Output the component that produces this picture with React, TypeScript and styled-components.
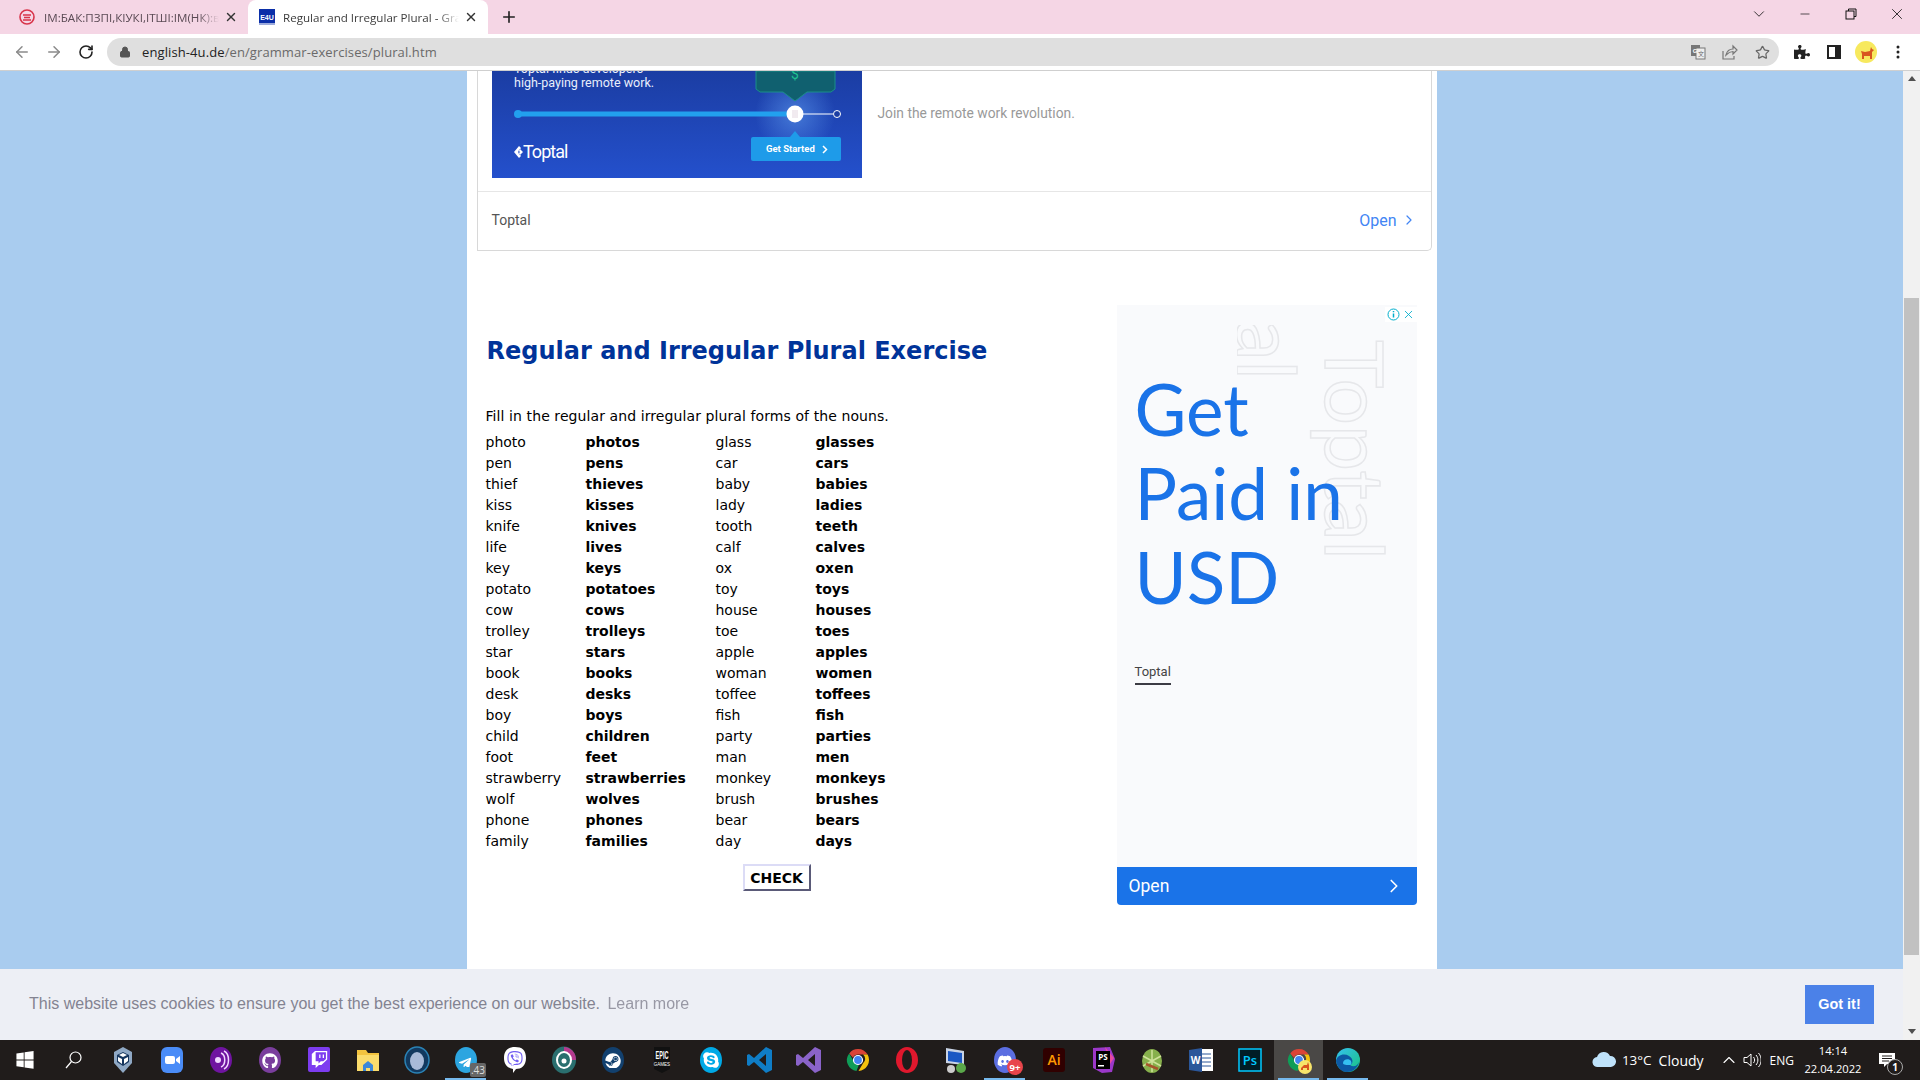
import React from "react";
import styled, { createGlobalStyle } from "styled-components";
import { ArrowLeft, ArrowRight, RotateCw, Star, Plus, X, ChevronDown, ChevronRight, ChevronUp, Minus, Lock } from "lucide-react";
import { FaGithub, FaTwitch, FaSteam, FaViber, FaTelegramPlane, FaSkype, FaDiscord, FaPuzzlePiece } from "react-icons/fa";

const Global = createGlobalStyle`
  html, body { margin: 0; padding: 0; width: 1920px; height: 1080px; overflow: hidden; }
  body { font-family: "Open Sans", "Liberation Sans", sans-serif; }
`;

const Browser = styled.div`display:flex;flex-direction:column;width:1920px;height:1080px;overflow:hidden;background:#fff;`;

/* ---------- tab strip ---------- */
const TabStrip = styled.div`display:flex;align-items:flex-end;height:34px;background:#f5d6e5;padding-left:8px;flex:none;`;
const Tab = styled.div<{ $active?: boolean }>`
  display:flex;align-items:center;height:34px;width:240px;box-sizing:border-box;padding:0 10px 0 11px;
  background:${p => (p.$active ? "#fff" : "transparent")};
  border-radius:${p => (p.$active ? "8px 8px 0 0" : "0")};
`;
const Favicon = styled.span<{ $active?: boolean }>`display:flex;flex:none;width:16px;height:16px;margin-right:${p => (p.$active ? 8 : 9)}px;`;
const TabTitle = styled.span<{ $active?: boolean }>`
  flex:1;min-width:0;font-size:11.6px;white-space:nowrap;overflow:hidden;color:${p => (p.$active ? "#3c3c3c" : "#5a4a54")};
  -webkit-mask-image:linear-gradient(to right,#000 88%,transparent 100%);mask-image:linear-gradient(to right,#000 88%,transparent 100%);
`;
const TabClose = styled.span`display:flex;flex:none;margin-left:5px;color:#333;`;
const NewTab = styled.span`display:flex;align-items:center;height:34px;margin-left:12px;color:#222;`;
const StripSpacer = styled.div`flex:1;`;
const WinBtn = styled.span`display:flex;align-items:center;justify-content:center;width:46px;height:28px;align-self:flex-start;color:#111;`;

/* ---------- toolbar ---------- */
const Toolbar = styled.div`display:flex;align-items:center;box-sizing:border-box;border-bottom:1px solid #cfcfcf;background:#fff;flex:none;padding:0 0 0 6px;height:37px;`;
const NavBtn = styled.span<{ $dim?: boolean }>`display:flex;align-items:center;justify-content:center;width:32px;color:${p => (p.$dim ? "#8a8a8a" : "#222")};`;
const Omnibox = styled.div`display:flex;align-items:center;height:28px;width:1672px;margin-left:5px;background:#dfdfdf;border-radius:14px;padding:0 1px 0 12px;box-sizing:border-box;`;
const Url = styled.span`font-size:13px;color:#6a6a6a;margin-left:11px;flex:1;letter-spacing:0.1px;`;
const UrlHost = styled.span`color:#222;`;
const OmniIcon = styled.span`display:flex;width:32px;justify-content:center;color:#666;`;
const ExtBtn = styled.span`display:flex;width:32px;justify-content:center;align-items:center;color:#222;`;
const ExtRow = styled.div`display:flex;margin-left:7px;`;

/* ---------- page ---------- */
const Viewport = styled.div`position:relative;display:flex;flex:1;min-height:0;`;
const PageBg = styled.div`flex:1;background:#a9ccef;display:flex;justify-content:center;overflow:hidden;`;
const Column = styled.div`width:970px;background:#fff;display:flex;flex-direction:column;`;

const TopAd = styled.div`margin-left:10px;width:955px;box-sizing:border-box;height:180px;flex:none;border:1px solid #d8d8d8;border-top:none;border-radius:0 0 5px 0;display:flex;flex-direction:column;`;
const TopAdBody = styled.div`display:flex;height:121px;box-sizing:border-box;border-bottom:1px solid #e6e6e6;padding-left:14px;flex:none;`;
const Banner = styled.svg`display:block;width:370px;height:107px;flex:none;`;
const Tagline = styled.div`font-family:Roboto,sans-serif;font-size:13.8px;color:#999;margin:34px 0 0 16px;height:24px;line-height:16px;`;
const TopAdFoot = styled.div`display:flex;flex:1;align-items:center;justify-content:space-between;padding:0 14px 2px 14px;`;
const Advertiser = styled.span`font-family:Roboto,sans-serif;font-size:14px;color:#555;`;
const OpenLink = styled.span`display:flex;align-items:center;gap:4px;font-family:Roboto,sans-serif;font-size:16px;color:#4285f4;`;

const Main = styled.div`display:flex;padding:54px 20px 0 19px;`;
const Exercise = styled.div`flex:1;font-family:"DejaVu Sans",Verdana,sans-serif;font-size:14px;color:#000;`;
const Title = styled.h1`margin:30px 0 0 1px;font-size:24px;line-height:32px;font-weight:700;color:#003399;white-space:nowrap;`;
const Lead = styled.p`margin:39px 0 0;line-height:21px;letter-spacing:.09px;`;
const WordGrid = styled.div`display:grid;grid-template-columns:100px 130px 100px auto;grid-auto-rows:21px;line-height:21px;margin-top:5px;width:420px;`;
const Answer = styled.span`font-weight:700;`;
const CheckRow = styled.div`margin:12px 0 0 257px;`;
const CheckBtn = styled.button`
  display:block;width:68px;height:27px;padding:0;background:#fff;font:700 14px "DejaVu Sans",sans-serif;color:#000;
  border:2px solid;border-color:#dcdcf6 #5a5a78 #5a5a78 #dcdcf6;
`;

const SideAd = styled.aside`width:300px;height:600px;flex:none;display:flex;flex-direction:column;font-family:Roboto,sans-serif;`;
const SideBody = styled.div`position:relative;flex:1;background:#f9fafc;overflow:hidden;padding:62px 0 0 18px;`;
const Headline = styled.div`position:relative;font-family:Lato,sans-serif;font-size:71px;line-height:84px;color:#1a73e8;`;
const Brand = styled.div`position:relative;display:inline-block;margin:45px 0 0 0;font-size:13px;line-height:16px;color:#444;border-bottom:2px solid #3c3c44;padding-bottom:3px;`;
const Watermark = styled.span`
  position:absolute;font-family:Lato,sans-serif;font-size:82px;line-height:84px;white-space:nowrap;color:transparent;
  -webkit-text-stroke:1.5px #e6e7ea;transform-origin:0 0;transform:rotate(90deg);
`;
const WatermarkOne = styled(Watermark)`left:282px;top:35px;`;
const WatermarkClip = styled.div`position:absolute;left:120px;top:20px;width:90px;height:60px;overflow:hidden;`;
const WatermarkTwo = styled(Watermark)`left:74px;top:-165px;`;
const AdChoices = styled.div`position:absolute;right:0;top:2px;display:flex;align-items:center;gap:2px;height:15px;padding:0 2px;background:#fff;color:#00aecd;`;
const SideOpen = styled.div`height:38px;flex:none;display:flex;align-items:center;justify-content:space-between;padding:0 12px 0 12px;background:#1a73e8;color:#fff;border-radius:0 0 4px 4px;font-size:17.5px;`;

const Scrollbar = styled.div`width:17px;flex:none;background:#f1f1f1;display:flex;flex-direction:column;align-items:center;justify-content:space-between;position:relative;padding:5px 0 6px;box-sizing:border-box;`;
const ScrollArrow = styled.span<{ $down?: boolean }>`width:0;height:0;border-left:4px solid transparent;border-right:4px solid transparent;${p => (p.$down ? "border-top:5px solid #505050;" : "border-bottom:5px solid #505050;")}`;
const Thumb = styled.div`position:absolute;left:1px;right:1px;top:227px;height:657px;background:#c1c1c1;`;

const CookieBar = styled.div`position:absolute;left:0;right:17px;bottom:0;height:71px;display:flex;align-items:center;justify-content:space-between;padding:0 29px;box-sizing:border-box;background:#edeff5;font-family:"Liberation Sans",Arial,sans-serif;font-size:16px;color:#838391;`;
const CookieText = styled.span`padding-bottom:2px;`;
const LearnMore = styled.span`opacity:.8;margin-left:3px;`;
const GotIt = styled.span`display:flex;align-items:center;justify-content:center;width:69px;height:39px;padding-bottom:2px;box-sizing:border-box;background:#4b81e8;color:#fff;font-weight:700;font-size:14.4px;`;

/* ---------- taskbar ---------- */
const Taskbar = styled.div`display:flex;height:40px;flex:none;background:#201c1b;color:#fff;`;
const Slot = styled.div<{ $running?: boolean; $active?: boolean }>`
  position:relative;width:49px;height:40px;display:flex;align-items:center;justify-content:center;flex:none;
  background:${p => (p.$active ? "#4a4846" : "transparent")};
  ${p => p.$running ? `&::after{content:"";position:absolute;left:4px;right:4px;bottom:0;height:2px;background:#76b9ed;}` : ""}
`;
const IconWrap = styled.div`position:relative;display:flex;`;
const TelegramBadge = styled.svg`position:absolute;right:-6px;bottom:-3px;`;
const DiscordBadge = styled.svg`position:absolute;right:-4px;bottom:-1px;`;
const Tray = styled.div`display:flex;align-items:center;margin-left:auto;height:40px;font-size:13px;`;
const Weather = styled.span`margin-left:6px;font-size:13.5px;`;
const Cloudy = styled.span`margin-left:7px;font-size:14px;`;
const TrayIcon = styled.span<{ $gap: number }>`display:flex;margin-left:${p => p.$gap}px;color:#fff;`;
const Lang = styled.span`margin-left:9px;font-size:12px;`;
const Clock = styled.div`display:flex;flex-direction:column;align-items:center;margin-left:0;width:78px;font-size:11.2px;line-height:18px;`;
const Notify = styled.span`position:relative;display:flex;margin:0 25px 0 7px;`;
const NotifyBadge = styled.span`position:absolute;right:-8px;bottom:-8px;width:14px;height:14px;border-radius:50%;border:1px solid #aaa;background:#201c1b;font-size:10px;line-height:14px;text-align:center;font-weight:700;`;

const rows: [string, string, string, string][] = [
  ["photo","photos","glass","glasses"],["pen","pens","car","cars"],["thief","thieves","baby","babies"],["kiss","kisses","lady","ladies"],
  ["knife","knives","tooth","teeth"],["life","lives","calf","calves"],["key","keys","ox","oxen"],["potato","potatoes","toy","toys"],
  ["cow","cows","house","houses"],["trolley","trolleys","toe","toes"],["star","stars","apple","apples"],["book","books","woman","women"],
  ["desk","desks","toffee","toffees"],["boy","boys","fish","fish"],["child","children","party","parties"],["foot","feet","man","men"],
  ["strawberry","strawberries","monkey","monkeys"],["wolf","wolves","brush","brushes"],["phone","phones","bear","bears"],["family","families","day","days"],
];

const S = 28;
const Svg: React.FC<{ children: React.ReactNode; size?: number }> = ({ children, size = S }) => (
  <svg width={size} height={size} viewBox="0 0 28 28">{children}</svg>
);
const Round: React.FC<{ bg: string; children: React.ReactNode }> = ({ bg, children }) => (
  <Svg><ellipse cx="14" cy="14" rx="11" ry="13" fill={bg} />{children}</Svg>
);
const ChromeIcon: React.FC<{ badge?: boolean }> = ({ badge }) => (
  <Svg>
    <path d="M14 3a11 11 0 0 1 9.600 5.600H14a5.500 5.500 0 0 0-5 3.200L5.200 7.400A11 11 0 0 1 14 3z" fill="#db4437" />
    <path d="M23.600 8.600A11 11 0 0 1 14.500 25l4.400-7.600a5.500 5.500 0 0 0 .2-8.800z" fill="#f4c20d" />
    <path d="M5.200 7.400L9.800 15.500a5.500 5.500 0 0 0 5.200 3L12.500 25A11 11 0 0 1 5.200 7.400z" fill="#0f9d58" />
    <circle cx="14" cy="14" r="4.500" fill="#4285f4" stroke="#fff" strokeWidth="1.200" />
    {badge && <><circle cx="20" cy="21" r="7" fill="#f7e46a" /><path d="M16 22l3-3h3l1-3 1 3v5h-2v-2h-4v2h-2z" fill="#d9541e" /></>}
  </Svg>
);
const icons: { key: string; node: React.ReactNode; running?: boolean; active?: boolean }[] = [
  { key: "win", node: <Svg size={24}><path d="M4 6.500l8.500-1.200v8H4zM13.500 5.100L24 3.600v9.700H13.500zM4 14.500h8.500v8L4 21.300zM13.500 14.500H24v9.700l-10.500-1.500z" fill="#fff" /></Svg> },
  { key: "search", node: <svg width="20" height="20" viewBox="0 0 20 20" fill="none" stroke="#fff" strokeWidth="1.200"><circle cx="11.500" cy="7.500" r="5.500" /><path d="M7.500 11.500L2 18" /></svg> },
  { key: "vbox", node: <Svg><path d="M14 1l9 5v11l-9 10-9-10V6z" fill="#8fa8c4" /><path d="M14 6l6 3v7l-6 4-6-4V9z" fill="#16365e" /><path d="M14 11l4-2-4-2-4 2z" fill="#fff" /><path d="M9 11l4 2v5l-4-3zM19 11l-4 2v5l4-3z" fill="#fff" /></Svg> },
  { key: "zoom", node: <Svg><rect x="3" y="1" width="22" height="26" rx="6" fill="#4a8cf7" /><rect x="7" y="10" width="10" height="8" rx="2" fill="#fff" /><path d="M18 13l4-3v8l-4-3z" fill="#fff" /></Svg> },
  { key: "podcast", node: <Round bg="#6f14a0"><circle cx="11" cy="14" r="3" fill="#f0d8ff" /><path d="M14 7c5 2 5 12 0 14M17 5c6 3 6 15 0 18" stroke="#f0d8ff" strokeWidth="1.500" fill="none" /></Round> },
  { key: "github", node: <Round bg="#7a3e9d"><foreignObject x="6" y="6" width="16" height="16"><FaGithub size={16} color="#fff" /></foreignObject></Round> },
  { key: "twitch", node: <Svg><rect x="3" y="1" width="22" height="25" rx="2" fill="#7d3cf0" /><foreignObject x="6" y="5" width="17" height="18"><FaTwitch size={17} color="#fff" /></foreignObject></Svg> },
  { key: "folder", node: <Svg><path d="M3 4h9l2 3h11v18H3z" fill="#f3c33f" /><path d="M3 9h22v16H3z" fill="#fbdc6c" /><path d="M9 25v-6l5-4 5 4v6h-3v-3h-4v3z" fill="#3b87d8" /></Svg> },
  { key: "orb", node: <Svg><ellipse cx="14" cy="14" rx="12" ry="13" fill="#12395f" stroke="#2a82b5" strokeWidth="1.500" /><ellipse cx="14" cy="15" rx="7" ry="9" fill="#a8bad8" /></Svg> },
  { key: "telegram", running: true, node: <IconWrap><Round bg="#2ca5e0"><foreignObject x="6" y="7" width="14" height="14"><FaTelegramPlane size={14} color="#fff" /></foreignObject></Round><TelegramBadge width="16" height="14"><rect width="16" height="14" rx="2" fill="#666" /><text x="8" y="11" fontSize="10" fill="#ddd" textAnchor="middle" fontFamily="Open Sans">.43</text></TelegramBadge></IconWrap> },
  { key: "viber", node: <Svg><path d="M14 1c7 0 11 3 11 11s-5 11-10 11l-3 4v-4c-5-1-9-4-9-11S7 1 14 1z" fill="#fff" /><foreignObject x="6" y="4" width="16" height="16"><FaViber size={16} color="#7360f2" /></foreignObject></Svg> },
  { key: "uplay", node: <Svg><ellipse cx="14" cy="14" rx="12" ry="13.500" fill="#2a6f6f" /><path d="M14 1a12 13 0 0 1 12 13l-5 0a7 8 0 0 0-7-8z" fill="#b53a8f" /><ellipse cx="14" cy="14" rx="7" ry="8" fill="none" stroke="#fff" strokeWidth="2" /><circle cx="14" cy="15" r="2.500" fill="#fff" /></Svg> },
  { key: "steam", node: <Round bg="#12406e"><foreignObject x="6" y="6" width="16" height="16"><FaSteam size={16} color="#fff" /></foreignObject></Round> },
  { key: "epic", node: <Svg><path d="M6 1h16v22l-8 4-8-4z" fill="#111" /><text x="14" y="13" fontSize="10" fontWeight="700" fill="#fff" textAnchor="middle" fontFamily="Liberation Sans" textLength="13" lengthAdjust="spacingAndGlyphs">EPIC</text><text x="14" y="20" fontSize="4.500" fill="#fff" textAnchor="middle" fontFamily="Liberation Sans">GAMES</text></Svg> },
  { key: "skype", node: <Round bg="#00a9e6"><foreignObject x="5" y="5" width="18" height="18"><FaSkype size={18} color="#fff" /></foreignObject></Round> },
  { key: "code", node: <Svg><path d="M20 1l6 3v20l-6 3L8 16l-5 4-2-1V9l2-1 5 4zM20 8l-7 6 7 6z" fill="#0f7dc6" /></Svg> },
  { key: "vs", node: <Svg><path d="M20 1l6 3v20l-6 3L8 16l-5 4-2-1V9l2-1 5 4zM20 8l-7 6 7 6z" fill="#8a63c9" /></Svg> },
  { key: "chrome", node: <ChromeIcon /> },
  { key: "opera", node: <Svg><ellipse cx="14" cy="14" rx="11" ry="13" fill="#e0182d" /><ellipse cx="14" cy="14" rx="5" ry="10" fill="#201c1b" /></Svg> },
  { key: "remote", node: <Svg><path d="M4 2l18 3v14L4 17z" fill="#c9d4e6" /><path d="M6 5l14 2v10L6 15z" fill="#1a58c4" /><circle cx="19" cy="22" r="5" fill="#5aa84a" /><circle cx="9" cy="23" r="4" fill="#ccc" /></Svg> },
  { key: "discord", running: true, node: <IconWrap><Round bg="#5b6ee1"><foreignObject x="6" y="6" width="16" height="16"><FaDiscord size={16} color="#fff" /></foreignObject></Round><DiscordBadge width="16" height="16"><circle cx="8" cy="8" r="8" fill="#e8454c" /><text x="8" y="11.500" fontSize="9.500" fontWeight="700" fill="#fff" textAnchor="middle" fontFamily="Open Sans">9+</text></DiscordBadge></IconWrap> },
  { key: "ai", node: <Svg><rect x="3" y="2" width="22" height="24" rx="3" fill="#300000" /><text x="14" y="19" fontSize="14" fontWeight="600" fill="#ff9a00" textAnchor="middle" fontFamily="Open Sans">Ai</text></Svg> },
  { key: "ps-storm", node: <Svg><path d="M4 2l17-1 5 12-3 13-10 1-9-5z" fill="#9b38c9" /><path d="M16 1l9 11-4 6z" fill="#e84aa0" /><rect x="7" y="5" width="14" height="18" fill="#000" /><text x="14" y="14" fontSize="8" fontWeight="700" fill="#fff" textAnchor="middle" fontFamily="Open Sans">PS</text><rect x="9" y="19" width="6" height="1.500" fill="#fff" /></Svg> },
  { key: "lime", node: <Svg><ellipse cx="14" cy="15" rx="10" ry="12" fill="#87b04c" /><path d="M14 4v22M5 10l18 10M23 10L5 20" stroke="#cfe29a" strokeWidth="1.500" /><path d="M8 18l12 5" stroke="#a5552b" strokeWidth="2.500" /></Svg> },
  { key: "word", node: <Svg><rect x="11" y="3" width="15" height="22" fill="#fff" /><path d="M14 8h10M14 12h10M14 16h10M14 20h10" stroke="#2b579a" /><path d="M2 4l13-2v24L2 24z" fill="#2b579a" /><text x="8.500" y="18" fontSize="10" fontWeight="700" fill="#fff" textAnchor="middle" fontFamily="Open Sans">W</text></Svg> },
  { key: "ps", node: <Svg><rect x="3" y="3" width="22" height="22" fill="#001d26" stroke="#00c8ff" strokeWidth="1.500" /><text x="14" y="19" fontSize="13" fontWeight="600" fill="#00c8ff" textAnchor="middle" fontFamily="Open Sans">Ps</text></Svg> },
  { key: "chrome2", running: true, active: true, node: <ChromeIcon badge /> },
  { key: "edge", running: true, node: <Svg><defs><linearGradient id="edgeG" x1="0" y1="0" x2="1" y2="1"><stop offset="0" stopColor="#35c1f1" /><stop offset="1" stopColor="#19c37d" /></linearGradient></defs><circle cx="14" cy="14" r="12" fill="url(#edgeG)" /><path d="M2 15C3 9 10 7 15 10s4 8 1 9c4 3 8 0 9-3-1 6-6 10-12 10S3 21 2 15z" fill="#0c59a4" /><path d="M9 17c0-4 6-5 8-2 1 2 0 4-1 4-3 0-7-0-7-2z" fill="#35c1f1" /></Svg> },
];

export default function App() {
  return (
    <Browser>
      <Global />
      <TabStrip>
        <Tab>
          <Favicon>
            <svg width="16" height="16" viewBox="0 0 16 16"><circle cx="8" cy="8" r="7" fill="none" stroke="#d8344a" strokeWidth="1.600" /><path d="M4 6l8 0M4 11h8M5 8.500h6" stroke="#d8344a" strokeWidth="1.500" /></svg>
          </Favicon>
          <TabTitle>ІМ:БАК:ПЗПІ,КІУКІ,ІТШІ:ІМ(НК):в2</TabTitle>
          <TabClose><X size={14} strokeWidth={2.4} /></TabClose>
        </Tab>
        <Tab $active>
          <Favicon $active>
            <svg width="16" height="16" viewBox="0 0 16 16"><rect width="16" height="16" fill="#0b2fa8" /><rect y="14" width="16" height="2" fill="#fff" opacity=".6" /><text x="8" y="10.500" fontSize="7" fontWeight="700" fill="#fff" textAnchor="middle" fontFamily="Liberation Sans">E4U</text></svg>
          </Favicon>
          <TabTitle $active>Regular and Irregular Plural - Grammar</TabTitle>
          <TabClose><X size={14} strokeWidth={2.4} /></TabClose>
        </Tab>
        <NewTab><Plus size={18} strokeWidth={2.2} /></NewTab>
        <StripSpacer />
        <WinBtn><ChevronDown size={18} strokeWidth={1.1} /></WinBtn>
        <WinBtn><Minus size={14} strokeWidth={1.2} /></WinBtn>
        <WinBtn>
          <svg width="12" height="12" viewBox="0 0 12 12" fill="none" stroke="#111"><rect x="1" y="3" width="8" height="8" /><path d="M3.500 3V1h7.500v7.500H9" /></svg>
        </WinBtn>
        <WinBtn><X size={18} strokeWidth={1.1} /></WinBtn>
      </TabStrip>

      <Toolbar>
        <NavBtn $dim><ArrowLeft size={18} /></NavBtn>
        <NavBtn $dim><ArrowRight size={18} /></NavBtn>
        <NavBtn><RotateCw size={16} strokeWidth={2.4} /></NavBtn>
        <Omnibox>
          <Lock size={12} color="#555" fill="#555" />
          <Url><UrlHost>english-4u.de</UrlHost>/en/grammar-exercises/plural.htm</Url>
          <OmniIcon>
            <svg width="16" height="16" viewBox="0 0 16 16"><rect x="1" y="1" width="9" height="11" fill="#777" /><rect x="6" y="4" width="9" height="11" fill="#eee" stroke="#777" /><text x="5" y="9" fontSize="6" fontWeight="700" fill="#fff" textAnchor="middle" fontFamily="Liberation Sans">G</text><text x="11" y="12" fontSize="6" fill="#666" textAnchor="middle" fontFamily="Noto Sans CJK SC">文</text></svg>
          </OmniIcon>
          <OmniIcon>
            <svg width="16" height="16" viewBox="0 0 16 16" fill="none" stroke="#777" strokeWidth="1.200"><path d="M1 7v8h11v-3" /><path d="M4 11c1-4 4-6 7-6V2l4 4-4 4V7.500C8 7.500 6 9 4 11z" /></svg>
          </OmniIcon>
          <OmniIcon><Star size={15} strokeWidth={2} /></OmniIcon>
        </Omnibox>
        <ExtRow>
          <ExtBtn><FaPuzzlePiece size={16} /></ExtBtn>
          <ExtBtn>
            <svg width="14" height="14" viewBox="0 0 14 14"><rect x="1" y="1" width="12" height="12" fill="#fff" stroke="#222" strokeWidth="2" /><rect x="8" y="1" width="5" height="12" fill="#222" /></svg>
          </ExtBtn>
          <ExtBtn>
            <svg width="22" height="22" viewBox="0 0 22 22"><circle cx="11" cy="11" r="11" fill="#f7e95e" /><path d="M6 10l4 1 5-1 1-4 1 2 2 1-2 2v7h-2v-3h-6v3H7v-5z" fill="#d8571f" /></svg>
          </ExtBtn>
          <ExtBtn>
            <svg width="4" height="14" viewBox="0 0 4 14" fill="#222"><circle cx="2" cy="2" r="1.500" /><circle cx="2" cy="7" r="1.500" /><circle cx="2" cy="12" r="1.500" /></svg>
          </ExtBtn>
        </ExtRow>
      </Toolbar>

      <Viewport>
        <PageBg>
          <Column>
            <TopAd>
              <TopAdBody>
                <Banner viewBox="0 0 370 107">
                  <defs>
                    <linearGradient id="bannerG" x1="0" y1="0" x2="0" y2="1"><stop offset="0" stopColor="#1b3da3" /><stop offset="1" stopColor="#2450cc" /></linearGradient>
                    <radialGradient id="glow"><stop offset="0" stopColor="#4f86e0" stopOpacity=".8" /><stop offset="1" stopColor="#4f86e0" stopOpacity="0" /></radialGradient>
                  </defs>
                  <rect width="370" height="107" fill="url(#bannerG)" />
                  <circle cx="303" cy="43" r="40" fill="url(#glow)" />
                  <text x="22" y="1.500" fontSize="12.500" fill="#e8eefc" fontFamily="Roboto">Toptal finds developers</text>
                  <text x="22" y="15.500" fontSize="12.500" fill="#e8eefc" fontFamily="Roboto">high-paying remote work.</text>
                  <path d="M264 0h79v18l-4 3h-24l-12 9-12-9h-23l-4-3z" fill="#10606f" stroke="#1a8f8a" />
                  <text x="303" y="8" fontSize="14" fill="#1fbf8f" textAnchor="middle" fontFamily="Roboto">$</text>
                  <circle cx="26" cy="43" r="4" fill="#22a0ee" />
                  <rect x="26" y="40.500" width="278" height="5" fill="#22a0ee" />
                  <line x1="303" y1="43" x2="341" y2="43" stroke="#fff" />
                  <circle cx="345" cy="43" r="3.500" fill="#1b3da3" stroke="#fff" />
                  <circle cx="303" cy="43" r="8.500" fill="#fff" />
                  <path d="M301 39v8M303 39v8M305 39v8" stroke="#e3d6e0" />
                  <path d="M298 66l5-6 5 6z" fill="#1e9be9" />
                  <rect x="259" y="66" width="90" height="24" rx="2" fill="#1e9be9" />
                  <text x="274" y="81" fontSize="9.500" fontWeight="700" fill="#fff" fontFamily="Roboto">Get Started</text>
                  <path d="M331 75l3.500 3.500-3.500 3.500" fill="none" stroke="#fff" strokeWidth="1.500" />
                  <path d="M27 75l-5 6 5 6 2-2-3-4 3-4zM28 78l3 3-3 3-1.500-1.500 1.500-1.500-1.500-1.500z" fill="#fff" />
                  <text x="31" y="86.500" fontSize="18" fill="#fff" fontFamily="Roboto" letterSpacing="-1">Toptal</text>
                </Banner>
                <Tagline>Join the remote work revolution.</Tagline>
              </TopAdBody>
              <TopAdFoot>
                <Advertiser>Toptal</Advertiser>
                <OpenLink>Open <ChevronRight size={16} strokeWidth={1.8} /></OpenLink>
              </TopAdFoot>
            </TopAd>

            <Main>
              <Exercise>
                <Title>Regular and Irregular Plural Exercise</Title>
                <Lead>Fill in the regular and irregular plural forms of the nouns.</Lead>
                <WordGrid>
                  {rows.map(r => (
                    <React.Fragment key={r[0]}>
                      <span>{r[0]}</span><Answer>{r[1]}</Answer><span>{r[2]}</span><Answer>{r[3]}</Answer>
                    </React.Fragment>
                  ))}
                </WordGrid>
                <CheckRow><CheckBtn>CHECK</CheckBtn></CheckRow>
              </Exercise>
              <SideAd>
                <SideBody>
                  <WatermarkOne>Toptal</WatermarkOne>
                  <WatermarkClip><WatermarkTwo>Toptal</WatermarkTwo></WatermarkClip>
                  <AdChoices>
                    <svg width="13" height="13" viewBox="0 0 13 13" fill="none" stroke="#00aecd"><circle cx="6.500" cy="6.500" r="5.500" /><path d="M6.500 5.500v4M6.500 3v1.200" strokeWidth="1.500" /></svg>
                    <X size={13} strokeWidth={1.6} />
                  </AdChoices>
                  <Headline>Get<br />Paid in<br />USD</Headline>
                  <Brand>Toptal</Brand>
                </SideBody>
                <SideOpen>Open <ChevronRight size={22} strokeWidth={1.8} /></SideOpen>
              </SideAd>
            </Main>
          </Column>
        </PageBg>
        <Scrollbar>
          <ScrollArrow />
          <Thumb />
          <ScrollArrow $down />
        </Scrollbar>
        <CookieBar>
          <CookieText>This website uses cookies to ensure you get the best experience on our website. <LearnMore>Learn more</LearnMore></CookieText>
          <GotIt>Got it!</GotIt>
        </CookieBar>
      </Viewport>

      <Taskbar>
        {icons.map(i => (
          <Slot key={i.key} $running={i.running} $active={i.active}>{i.node}</Slot>
        ))}
        <Tray>
          <svg width="24" height="16" viewBox="0 0 24 16"><path d="M6 15a5 5 0 0 1-1-10 7 7 0 0 1 13-1 5.500 5.500 0 0 1 1 11z" fill="#bfe2fa" /></svg>
          <Weather>13°C</Weather>
          <Cloudy>Cloudy</Cloudy>
          <TrayIcon $gap={15}><ChevronUp size={20} strokeWidth={1.3} /></TrayIcon>
          <TrayIcon $gap={4}>
            <svg width="18" height="16" viewBox="0 0 18 16" fill="none" stroke="#fff"><path d="M1 5.500h3L8 2v12L4 10.500H1z" /><path d="M10.500 5c1.500 2 1.500 4 0 6M13 3c2.500 3 2.500 7 0 10M15.500 1c3.500 4 3.500 10 0 14" /></svg>
          </TrayIcon>
          <Lang>ENG</Lang>
          <Clock><span>14:14</span><span>22.04.2022</span></Clock>
          <Notify>
            <svg width="16" height="14" viewBox="0 0 16 14"><path d="M0 0h16v11H8l-3 3v-3H0z" fill="#fff" /><path d="M3 3h10M3 5.500h10M3 8h7" stroke="#201c1b" /></svg>
            <NotifyBadge>1</NotifyBadge>
          </Notify>
        </Tray>
      </Taskbar>
    </Browser>
  );
}
